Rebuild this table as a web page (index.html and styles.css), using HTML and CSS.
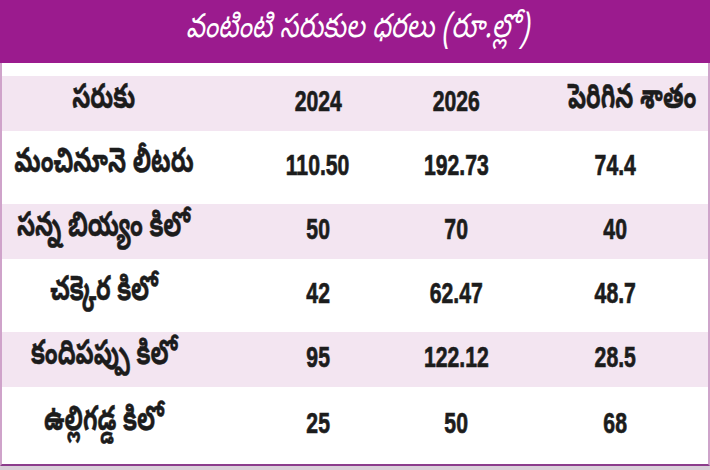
FILE: index.html
```html
<!DOCTYPE html>
<html lang="te">
<head>
<meta charset="utf-8">
<title>వంటింటి సరుకుల ధరలు</title>
<link rel="stylesheet" href="styles.css">
</head>
<body>
<div class="card">
  <div class="title"><span>వంటింటి సరుకుల ధరలు (రూ.ల్లో)</span></div>
  <div class="spacer"></div>
  <div class="row pink head">
    <div class="c1 te"><span>సరుకు</span></div>
    <div class="c2 num"><span>2024</span></div>
    <div class="c3 num"><span>2026</span></div>
    <div class="c4 te pct"><span>పెరిగిన శాతం</span></div>
  </div>
  <div class="row white">
    <div class="c1 te"><span>మంచినూనె లీటరు</span></div>
    <div class="c2 num"><span>110.50</span></div>
    <div class="c3 num"><span>192.73</span></div>
    <div class="c4 num"><span>74.4</span></div>
  </div>
  <div class="row pink">
    <div class="c1 te"><span>సన్న బియ్యం కిలో</span></div>
    <div class="c2 num"><span>50</span></div>
    <div class="c3 num"><span>70</span></div>
    <div class="c4 num"><span>40</span></div>
  </div>
  <div class="row white">
    <div class="c1 te"><span>చక్కెర కిలో</span></div>
    <div class="c2 num"><span>42</span></div>
    <div class="c3 num"><span>62.47</span></div>
    <div class="c4 num"><span>48.7</span></div>
  </div>
  <div class="row pink">
    <div class="c1 te"><span>కందిపప్పు కిలో</span></div>
    <div class="c2 num"><span>95</span></div>
    <div class="c3 num"><span>122.12</span></div>
    <div class="c4 num"><span>28.5</span></div>
  </div>
  <div class="row white last">
    <div class="c1 te"><span>ఉల్లిగడ్డ కిలో</span></div>
    <div class="c2 num"><span>25</span></div>
    <div class="c3 num"><span>50</span></div>
    <div class="c4 num"><span>68</span></div>
  </div>
</div>
</body>
</html>
```
FILE: styles.css
```css
html, body {
  margin: 0;
  padding: 0;
}
body {
  width: 710px;
  height: 470px;
  background: #d9cfd9;
  overflow: hidden;
}
.card {
  width: 710px;
  box-sizing: border-box;
  background: #ffffff;
  border-left: 2px solid #cfa3ca;
  border-right: 2px solid #cfa3ca;
  border-bottom: 2px solid #8c3d8c;
}
.title {
  height: 63px;
  margin: 0 -2px;
  background: #9b1b8e;
  color: #ffffff;
  font-family: "Noto Sans Telugu", "Noto Serif Telugu", "Lohit Telugu", "Gurajada", "Mallanna", "Ramabhadra", sans-serif;
  font-size: 33px;
  font-style: italic;
  display: flex;
  align-items: center;
  justify-content: center;
  padding-left: 6px;
  padding-bottom: 2px;
  box-sizing: border-box;
  white-space: nowrap;
}
.title span {
  display: inline-block;
  transform: scaleX(0.8);
}
.spacer {
  height: 13px;
}
.row {
  display: grid;
  grid-template-columns: 258px 116px 160px 1fr;
  align-items: center;
  color: #1c1c1c;
  padding-bottom: 4px;
  box-sizing: border-box;
}
.row.pink { height: 55px; background: #f3e5f1; }
.row.white { height: 73px; }
.row.last { height: 77px; }
.c1, .c2, .c3, .c4 {
  display: flex;
  justify-content: center;
  min-width: 0;
}
.c1 { padding-right: 54px; }
.c4 { padding-right: 14px; }
.pct { padding-left: 20px; padding-right: 0; }
.te {
  font-family: "Noto Sans Telugu", "Noto Serif Telugu", "Lohit Telugu", "Gurajada", "Mallanna", sans-serif;
  font-size: 34px;
  line-height: 1.3;
  font-weight: 700;
  white-space: nowrap;
}
.te span {
  display: inline-block;
  flex: none;
  transform: scaleX(0.69);
  -webkit-text-stroke: 0.5px #1c1c1c;
}
.num {
  font-family: "Liberation Sans", Arial, sans-serif;
  font-weight: 700;
  font-size: 29px;
}
.num span {
  display: inline-block;
  flex: none;
  transform: scaleX(0.73);
  -webkit-text-stroke: 0.7px #1c1c1c;
}
```
